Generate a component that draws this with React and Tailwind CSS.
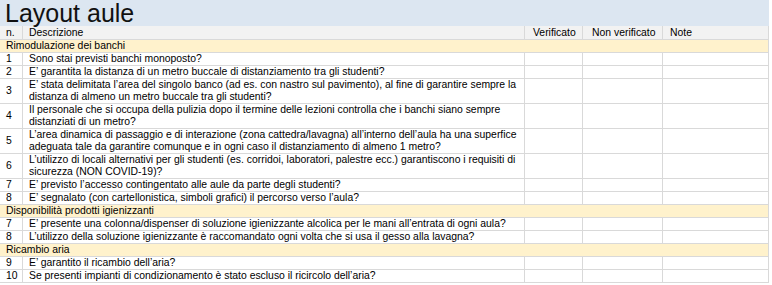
import React from "react";

const rows = [
  { s: "Rimodulazione dei banchi" },
  { n: "1", t: ["Sono stai previsti banchi monoposto?"] },
  { n: "2", t: ["E’ garantita la distanza di un metro buccale di distanziamento tra gli studenti?"] },
  { n: "3", t: ["E’ stata delimitata l’area del singolo banco (ad es. con nastro sul pavimento), al fine di garantire sempre la", "distanza di almeno un metro buccale tra gli studenti?"] },
  { n: "4", t: ["Il personale che si occupa della pulizia dopo il termine delle lezioni controlla che i banchi siano sempre", "distanziati di un metro?"] },
  { n: "5", t: ["L’area dinamica di passaggio e di interazione (zona cattedra/lavagna) all’interno dell’aula ha una superfice", "adeguata tale da garantire comunque e in ogni caso il distanziamento di almeno 1 metro?"] },
  { n: "6", t: ["L’utilizzo di locali alternativi per gli studenti (es. corridoi, laboratori, palestre ecc.) garantiscono i requisiti di", "sicurezza (NON COVID-19)?"] },
  { n: "7", t: ["E’ previsto l’accesso contingentato alle aule da parte degli studenti?"] },
  { n: "8", t: ["E’ segnalato (con cartellonistica, simboli grafici) il percorso verso l’aula?"] },
  { s: "Disponibilità prodotti igienizzanti" },
  { n: "7", t: ["E’ presente una colonna/dispenser di soluzione igienizzante alcolica per le mani all’entrata di ogni aula?"] },
  { n: "8", t: ["L’utilizzo della soluzione igienizzante è raccomandato ogni volta che si usa il gesso alla lavagna?"] },
  { s: "Ricambio aria" },
  { n: "9", t: ["E’ garantito il ricambio dell’aria?"] },
  { n: "10", t: ["Se presenti impianti di condizionamento è stato escluso il ricircolo dell’aria?"] },
];

export default function App() {
  return (
    <div className="w-[772px] h-[285px] bg-white text-black overflow-hidden" style={{ fontFamily: '"Liberation Sans", Arial, sans-serif' }}>
      <div className="w-[769px]">
        <div className="h-[26px] bg-[#dce6f1] pl-[5px] text-[25px] leading-[26px] text-[#111]">Layout aule</div>
        <div className="flex h-[14px] bg-[#f2f2f2] border-b border-[#d9d9d9] text-[10.4px] leading-[13px]">
          <div className="w-[23px] shrink-0 border-r border-[#d9d9d9] pl-[6px]">n.</div>
          <div className="w-[502px] shrink-0 border-r border-[#d9d9d9] pl-[6px]">Descrizione</div>
          <div className="w-[58px] shrink-0 border-r border-[#d9d9d9] pl-[8px]">Verificato</div>
          <div className="w-[80px] shrink-0 border-r border-[#d9d9d9] pl-[9px]">Non verificato</div>
          <div className="w-[106px] shrink-0 border-r border-[#d9d9d9] pl-[7px]">Note</div>
        </div>
        {rows.map((r, i) =>
          r.s ? (
            <div key={i} className="h-[13px] bg-[#fff2cc] border-b border-r border-[#d9d9d9] pl-[6px] text-[10.4px] leading-[12px] whitespace-nowrap">
              {r.s}
            </div>
          ) : (
            <div key={i} className={`flex ${r.t.length > 1 ? "h-[25px]" : "h-[13px]"} border-b border-[#d9d9d9] text-[10.4px] leading-[12px]`}>
              <div className="w-[23px] shrink-0 border-r border-[#d9d9d9] pl-[6px] flex items-center">{r.n}</div>
              <div className="w-[502px] shrink-0 border-r border-[#d9d9d9] pl-[6px] whitespace-nowrap">
                {r.t.map((l, j) => (
                  <div key={j}>{l}</div>
                ))}
              </div>
              <div className="w-[58px] shrink-0 border-r border-[#d9d9d9]"></div>
              <div className="w-[80px] shrink-0 border-r border-[#d9d9d9]"></div>
              <div className="w-[106px] shrink-0 border-r border-[#d9d9d9]"></div>
            </div>
          )
        )}
      </div>
    </div>
  );
}
